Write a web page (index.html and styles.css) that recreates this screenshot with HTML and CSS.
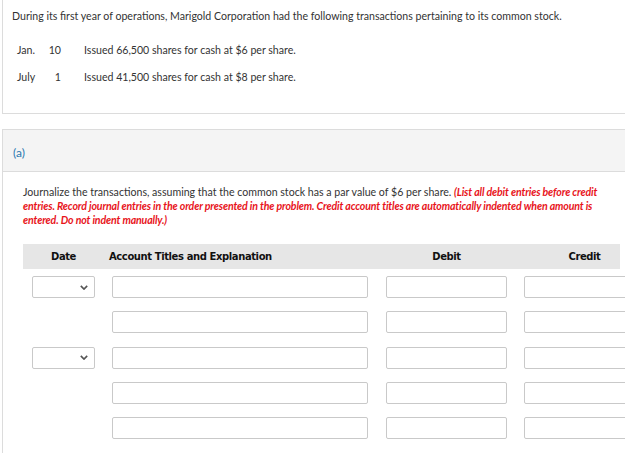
FILE: index.html
```html
<!DOCTYPE html>
<html>
<head>
<meta charset="utf-8">
<link rel="stylesheet" href="styles.css">
</head>
<body>
<div class="page">
  <section class="card intro">
    <p class="lead">During its first year of operations, Marigold Corporation had the following transactions pertaining to its common stock.</p>
    <div class="tx">
      <span class="mon">Jan.</span><span class="day">10</span><span class="desc">Issued 66,500 shares for cash at $6 per share.</span>
    </div>
    <div class="tx">
      <span class="mon">July</span><span class="day">1</span><span class="desc">Issued 41,500 shares for cash at $8 per share.</span>
    </div>
  </section>

  <section class="card part">
    <div class="part-head">(a)</div>
    <div class="part-body">
      <p class="instr">Journalize the transactions, assuming that the common stock has a par value of $6 per share. <em class="warn">(List all debit entries before credit entries. Record journal entries in the order presented in the problem. Credit account titles are automatically indented when amount is entered. Do not indent manually.)</em></p>

      <div class="journal">
        <div class="jrow jhead">
          <div class="c-date"><span class="h">Date</span></div>
          <div class="c-acct"><span class="h h-left">Account Titles and Explanation</span></div>
          <div class="c-num"><span class="h">Debit</span></div>
          <div class="c-num"><span class="h">Credit</span></div>
        </div>

        <div class="jrow">
          <div class="c-date"><div class="sel"><svg class="chev" viewBox="0 0 10 6" width="8" height="5"><path d="M1 1 L5 5 L9 1" fill="none" stroke="#555" stroke-width="2"/></svg></div></div>
          <div class="c-acct"><div class="inp acct"></div></div>
          <div class="c-num"><div class="inp num"></div></div>
          <div class="c-num"><div class="inp num"></div></div>
        </div>
        <div class="jrow">
          <div class="c-date"></div>
          <div class="c-acct"><div class="inp acct"></div></div>
          <div class="c-num"><div class="inp num"></div></div>
          <div class="c-num"><div class="inp num"></div></div>
        </div>
        <div class="jrow">
          <div class="c-date"><div class="sel"><svg class="chev" viewBox="0 0 10 6" width="8" height="5"><path d="M1 1 L5 5 L9 1" fill="none" stroke="#555" stroke-width="2"/></svg></div></div>
          <div class="c-acct"><div class="inp acct"></div></div>
          <div class="c-num"><div class="inp num"></div></div>
          <div class="c-num"><div class="inp num"></div></div>
        </div>
        <div class="jrow">
          <div class="c-date"></div>
          <div class="c-acct"><div class="inp acct"></div></div>
          <div class="c-num"><div class="inp num"></div></div>
          <div class="c-num"><div class="inp num"></div></div>
        </div>
        <div class="jrow">
          <div class="c-date"></div>
          <div class="c-acct"><div class="inp acct"></div></div>
          <div class="c-num"><div class="inp num"></div></div>
          <div class="c-num"><div class="inp num"></div></div>
        </div>
      </div>
    </div>
  </section>
</div>
</body>
</html>
```

FILE: styles.css
```css
html, body {
  margin: 0;
  padding: 0;
  background: #fff;
  overflow: hidden;
}
body {
  font-family: Lato, "Noto Sans", sans-serif;
  font-size: 10.6px;
  color: #333;
  width: 625px;
  height: 453px;
}
.page {
  padding-left: 2px;
}
.card {
  border-left: 1px solid #dcdcdc;
}
.intro {
  border-bottom: 1px solid #dcdcdc;
  padding: 9px 0 0 9px;
  height: 114px;
  box-sizing: border-box;
}
.lead {
  margin: 0 0 20px 0;
  line-height: 14px;
}
.tx {
  display: flex;
  line-height: 14px;
  margin-bottom: 13px;
}
.mon {
  width: 26px;
  padding-left: 5px;
}
.day {
  width: 18px;
  text-align: right;
}
.desc {
  padding-left: 23px;
}
.part {
  margin-top: 15px;
  border-top: 1px solid #dcdcdc;
  height: 340px;
}
.part-head {
  background: #f4f4f4;
  border-bottom: 1px solid #dcdcdc;
  height: 42px;
  box-sizing: border-box;
  padding: 15px 0 0 10px;
  font-size: 12px;
  color: #2b78b0;
}
.part-body {
  padding: 13px 0 0 20px;
}
.instr {
  margin: 0;
  line-height: 14px;
  width: 584px;
}
.warn {
  color: #e8141b;
  font-weight: bold;
  font-style: italic;
  letter-spacing: -0.15px;
}
.journal {
  margin-top: 17px;
  width: 597px;
}
.jrow {
  display: grid;
  grid-template-columns: 81px 273px 138px 105px;
  height: 35.3px;
  align-items: start;
}
.jhead {
  background: #e6e6e6;
  height: 25px;
  align-items: center;
  margin-bottom: 7px;
}
.h {
  display: block;
  font-family: "DejaVu Sans", sans-serif;
  font-weight: bold;
  font-size: 10px;
  letter-spacing: -0.4px;
  color: #111;
  text-align: center;
}
.c-date .h {
  width: 81px;
}
.c-acct .h {
  text-align: left;
  padding-left: 5px;
}
.c-num .h {
  margin-left: 9px;
  width: 121px;
}
.sel {
  margin-left: 9px;
  width: 63px;
  height: 22px;
  box-sizing: border-box;
  border: 1px solid #c9c9c9;
  border-radius: 2px;
  display: flex;
  align-items: center;
  justify-content: flex-end;
  padding-right: 6px;
}
.inp {
  height: 22px;
  box-sizing: border-box;
  border: 1px solid #c9c9c9;
  border-radius: 2px;
}
.acct {
  margin-left: 8px;
  width: 256px;
}
.num {
  margin-left: 9px;
  width: 121px;
}
```
